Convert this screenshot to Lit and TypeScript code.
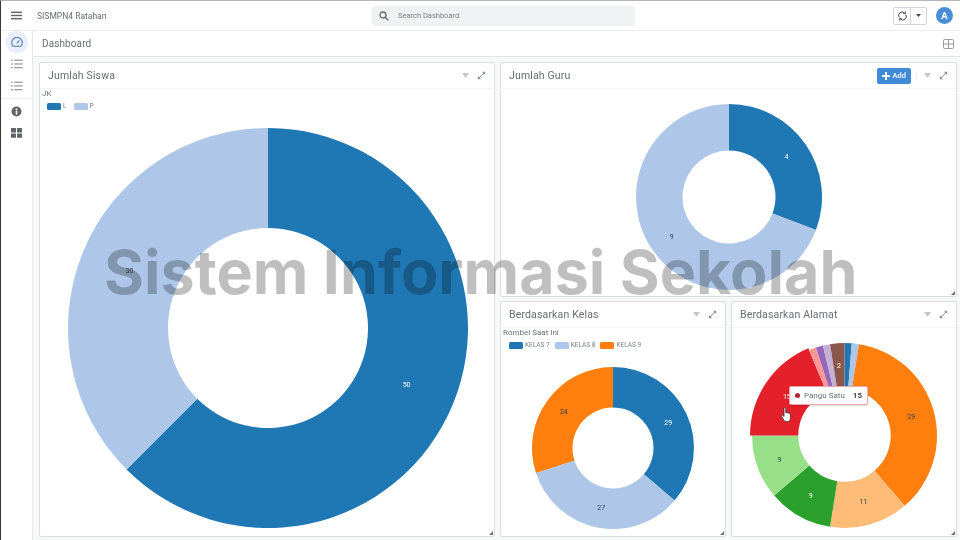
import { LitElement, html, css, svg } from "lit";
import { customElement, property } from "lit/decorators.js";

interface Slice { v: number; c: string; t?: string; label?: boolean; grow?: number }

const BLUE = "#1f77b4", LBLUE = "#aec7e8", ORANGE = "#ff7f0e", PEACH = "#ffbb78";
const DARK = "#333f4d", LIGHT = "#ffffff";

@customElement("x-donut")
class XDonut extends LitElement {
  @property({ type: Number }) size = 100;
  @property({ type: Number }) fontSize = 7;
  @property({ attribute: false }) slices: Slice[] = [];
  static styles = css`
    :host { display: block; flex: none; }
    svg { display: block; overflow: visible; }
    text { font-family: Roboto, sans-serif; text-anchor: middle; dominant-baseline: central; }
  `;
  render() {
    const r = this.size / 2, ri = r / 2;
    const total = this.slices.reduce((a, s) => a + s.v, 0);
    const pt = (rad: number, a: number) => [r + rad * Math.sin(a), r - rad * Math.cos(a)];
    let acc = 0;
    const parts = this.slices.map((s) => {
      const a0 = (acc / total) * 2 * Math.PI;
      acc += s.v;
      const a1 = (acc / total) * 2 * Math.PI;
      const large = a1 - a0 > Math.PI ? 1 : 0;
      const ro = r + (s.grow ?? 0);
      const [x0, y0] = pt(ro, a0), [x1, y1] = pt(ro, a1), [x2, y2] = pt(ri, a1), [x3, y3] = pt(ri, a0);
      const d = `M${x0} ${y0}A${ro} ${ro} 0 ${large} 1 ${x1} ${y1}L${x2} ${y2}A${ri} ${ri} 0 ${large} 0 ${x3} ${y3}Z`;
      const [lx, ly] = pt(r * 0.75, (a0 + a1) / 2);
      return svg`<path d=${d} fill=${s.c}></path>${s.label === false ? null : svg`<text x=${lx} y=${ly} font-size=${this.fontSize} fill=${s.t ?? DARK}>${s.v}</text>`}`;
    });
    return html`<svg width=${this.size} height=${this.size} viewBox="0 0 ${this.size} ${this.size}">${parts}</svg>`;
  }
}

const filterIcon = html`<svg width="7" height="5" viewBox="0 0 7 5"><path d="M0 0h7L3.5 5z" fill="#c4c8cc"/></svg>`;
const expandIcon = html`<svg width="9" height="9" viewBox="0 0 9 9"><path d="M1.5 7.5l6-6" stroke="#8a8f94" stroke-width=".9" fill="none"/><path d="M5 .8h3.2V4zM.8 5v3.2H4z" fill="#8a8f94"/></svg>`;
const listIcon = html`<svg width="12" height="10" viewBox="0 0 12 10" fill="#9a9fa4"><rect x="0" y=".6" width="1.8" height="1.3"/><rect x="3.2" y=".6" width="8.400" height="1.3"/><rect x="0" y="4.300" width="1.8" height="1.3"/><rect x="3.2" y="4.300" width="8.400" height="1.3"/><rect x="0" y="8" width="1.8" height="1.3"/><rect x="3.2" y="8" width="8.400" height="1.3"/></svg>`;

@customElement("x-panel")
class XPanel extends LitElement {
  @property() heading = "";
  static styles = css`
    :host { display: flex; flex-direction: column; min-width: 0; min-height: 0; background: #fff; border: 1px solid #dcdfe2; border-radius: 2px; box-sizing: border-box; position: relative; }
    .head { height: 25px; flex: none; display: flex; align-items: center; padding: 0 8px 0 8px; border-bottom: 1px solid #f3f4f5; }
    .title { flex: 1; font: 400 10.5px Roboto, sans-serif; letter-spacing: .15px; color: #666c72; }
    .tools { display: flex; align-items: center; gap: 8px; }
    .body { flex: 1; min-height: 0; display: flex; flex-direction: column; }
    .grip { position: absolute; right: 1px; bottom: 1px; width: 4px; height: 4px; }
  `;
  render() {
    return html`
      <div class="head">
        <span class="title">${this.heading}</span>
        <slot name="action"></slot>
        <span class="tools">${filterIcon}${expandIcon}</span>
      </div>
      <div class="body"><slot></slot></div>
      <svg class="grip" viewBox="0 0 5 5"><path d="M5 0v5H0z" fill="#6d7278"/></svg>`;
  }
}

@customElement("app-root")
class AppRoot extends LitElement {
  static styles = css`
    :host { display: block; width: 960px; height: 540px; overflow: hidden; position: relative; box-sizing: border-box; border-top: 1px solid #b4b6b8; border-left: 1px solid #3a3a3a; background: #f7f8f8; font-family: Roboto, sans-serif; filter: blur(.3px); }
    .top { height: 29px; display: grid; grid-template-columns: 371px 263px 1fr; align-items: center; background: #fff; border-bottom: 1px solid #eceeef; }
    .brand { display: flex; align-items: center; gap: 15px; padding-left: 10px; font-size: 8.5px; color: #666c72; }
    .search { height: 20px; background: #f0f1f2; border-radius: 4px; display: flex; align-items: center; gap: 9px; padding-left: 7px; font-size: 7.5px; color: #777c82; }
    .right { display: flex; align-items: center; justify-content: flex-end; padding-right: 7px; gap: 9px; }
    .btns { display: flex; height: 16px; border: 1px solid #d3d5d8; border-radius: 2px; background: #fff; }
    .btns span { display: flex; align-items: center; justify-content: center; }
    .sync { width: 16px; border-right: 1px solid #d3d5d8; }
    .caret { width: 15px; }
    .avatar { width: 17px; height: 17px; border-radius: 50%; background: #4a8fd6; color: #fff; font-size: 9.5px; font-weight: 700; display: flex; align-items: center; justify-content: center; }
    .main { display: flex; height: 509px; }
    .side { width: 31px; flex: none; background: #fff; border-right: 1px solid #e4e6e8; display: flex; flex-direction: column; align-items: center; }
    .item { width: 22px; height: 22px; display: flex; align-items: center; justify-content: center; border-radius: 50%; }
    .item.on { background: #e9f0f9; }
    .sep { align-self: stretch; height: 1px; background: #eceeef; margin: 1px 0; }
    .page { flex: 1; min-width: 0; display: flex; flex-direction: column; }
    .crumb { height: 25px; flex: none; display: flex; align-items: center; justify-content: space-between; padding: 0 6px 0 9px; background: #fff; border-bottom: 1px solid #e4e6e8; font-size: 10px; letter-spacing: .1px; color: #666c72; }
    .grid { flex: 1; min-height: 0; display: grid; grid-template-columns: 456px 457px; gap: 5px; padding: 5px 3px 3px 6px; }
    .col { display: grid; grid-template-rows: 235px 236px; gap: 4px; min-height: 0; }
    .row { display: grid; grid-template-columns: 226px 226px; gap: 5px; min-height: 0; }
    .legend-title { font-size: 8px; color: #6b7076; padding: 0 0 0 2px; line-height: 10px; }
    .legend { display: flex; align-items: center; padding: 3px 0 0 8px; font-size: 6.5px; color: #7c8186; line-height: 8px; }
    .legend.tight { padding-left: 7px; }
    .sw { width: 14px; height: 7px; border-radius: 1.5px; margin-right: 2px; }
    .lab { margin-right: 7px; }
    .lab.wide { margin-right: 5px; }
    .chart-a { margin: 18px 0 0 28px; }
    .chart-b { margin: 15px 0 0 135px; }
    .chart-c { margin: 18px 0 0 31px; }
    .chart-d { margin: 15px 0 0 20px; }
    .add { display: flex; align-items: center; gap: 3px; height: 16px; padding: 0 5px; background: #3f8bd8; color: #fff; border-radius: 2px; font-size: 7.5px; font-weight: 500; margin-right: 5px; }
    .vline { width: 1px; height: 12px; background: #eceeef; margin-right: 7px; }
    .watermark { position: absolute; left: 103px; top: 236px; font: 700 61px Inter, sans-serif; color: rgba(0,0,0,.25); white-space: nowrap; line-height: 70px; pointer-events: none; }
    .tip { position: absolute; left: 788px; top: 385px; height: 19px; width: 79px; box-sizing: border-box; background: #fff; border: 1px solid #e9a9ad; border-radius: 2px; display: flex; align-items: center; padding: 0 5px 0 5px; font-size: 8px; color: #6b7076; box-shadow: 0 1px 2px rgba(0,0,0,.15); }
    .dot { width: 5px; height: 5px; border-radius: 50%; background: #b3252e; margin-right: 4px; }
    .tip b { margin-left: auto; color: #444; }
    .hand { position: absolute; left: 780px; top: 406px; }
  `;
  render() {
    const siswa: Slice[] = [{ v: 50, c: BLUE, t: LIGHT }, { v: 30, c: LBLUE }];
    const guru: Slice[] = [{ v: 4, c: BLUE, t: LIGHT }, { v: 9, c: LBLUE }];
    const kelas: Slice[] = [{ v: 29, c: BLUE, t: LIGHT }, { v: 27, c: LBLUE }, { v: 24, c: ORANGE }];
    const alamat: Slice[] = [
      { v: 1, c: BLUE, label: false }, { v: 1, c: LBLUE, label: false }, { v: 29, c: ORANGE }, { v: 11, c: PEACH },
      { v: 9, c: "#2ca02c", t: LIGHT }, { v: 9, c: "#98df8a" }, { v: 15, c: "#e4202a", t: LIGHT, grow: 2 },
      { v: 1, c: "#ff9896", label: false }, { v: 1, c: "#9467bd", label: false }, { v: 1, c: "#c5b0d5", label: false },
      { v: 2, c: "#8c564b", t: LIGHT },
    ];
    return html`
      <div class="top">
        <div class="brand">
          <svg width="11" height="9" viewBox="0 0 11 9" fill="#5f6469"><rect width="11" height="1.4" y=".6"/><rect width="11" height="1.4" y="3.8"/><rect width="11" height="1.4" y="7"/></svg>
          <span>SISMPN4 Ratahan</span>
        </div>
        <div class="search">
          <svg width="10" height="10" viewBox="0 0 10 10" fill="none" stroke="#5f6469" stroke-width="1.3"><circle cx="4" cy="4" r="3"/><path d="M6.2 6.2L9.4 9.4"/></svg>
          <span>Search Dashboard</span>
        </div>
        <div class="right">
          <div class="btns">
            <span class="sync"><svg width="9" height="10" viewBox="0 0 9 10" fill="none" stroke="#444" stroke-width="1"><path d="M1.2 6.4A3.5 3.5 0 0 1 6.6 2"/><path d="M7.8 3.6A3.5 3.5 0 0 1 2.4 8"/><path d="M7.4 .4v2.2H5.2M1.6 9.6V7.4h2.2" stroke-width=".9"/></svg></span>
            <span class="caret"><svg width="5" height="3" viewBox="0 0 5 3"><path d="M0 0h5L2.5 3z" fill="#444"/></svg></span>
          </div>
          <div class="avatar">A</div>
        </div>
      </div>
      <div class="main">
        <div class="side">
          <div class="item on"><svg width="12" height="10" viewBox="0 0 12 10" fill="none" stroke="#4f7fae" stroke-width="1.1"><path d="M2 9.2A5.3 5.3 0 1 1 10 9.2z"/><path d="M6 6.4L8.4 3.4"/></svg></div>
          <div class="item">${listIcon}</div>
          <div class="item">${listIcon}</div>
          <div class="sep"></div>
          <div class="item"><svg width="11" height="11" viewBox="0 0 11 11"><circle cx="5.5" cy="5.5" r="5" fill="#5f6469"/><rect x="4.7" y="4.6" width="1.6" height="4" fill="#fff"/><rect x="4.7" y="2.4" width="1.6" height="1.5" fill="#fff"/></svg></div>
          <div class="item"><svg width="11" height="10" viewBox="0 0 11 10" fill="#5f6469"><rect width="5" height="4.4" rx=".5"/><rect x="6" width="5" height="4.4" rx=".5"/><rect y="5.4" width="5" height="4.4" rx=".5"/><rect x="6" y="5.4" width="5" height="4.4" rx=".5"/></svg></div>
        </div>
        <div class="page">
          <div class="crumb">
            <span>Dashboard</span>
            <svg width="11" height="10" viewBox="0 0 11 10" fill="none" stroke="#8d9297" stroke-width=".9"><rect x=".5" y=".5" width="10" height="9" rx="1"/><path d="M.5 5h10M5.5 .5v9"/></svg>
          </div>
          <div class="grid">
            <x-panel heading="Jumlah Siswa">
              <div class="legend-title">JK</div>
              <div class="legend tight"><span class="sw" style="background:${BLUE}"></span><span class="lab">L</span><span class="sw" style="background:${LBLUE}"></span><span>P</span></div>
              <x-donut class="chart-a" size="400" .slices=${siswa}></x-donut>
            </x-panel>
            <div class="col">
              <x-panel heading="Jumlah Guru">
                <div slot="action" class="add"><svg width="8" height="8" viewBox="0 0 8 8" fill="#fff"><rect x="3" width="2" height="8"/><rect y="3" width="8" height="2"/></svg>Add</div>
                <div slot="action" class="vline"></div>
                <x-donut class="chart-b" size="186" .slices=${guru}></x-donut>
              </x-panel>
              <div class="row">
                <x-panel heading="Berdasarkan Kelas">
                  <div class="legend-title">Rombel Saat Ini</div>
                  <div class="legend"><span class="sw" style="background:${BLUE}"></span><span class="lab wide">KELAS 7</span><span class="sw" style="background:${LBLUE}"></span><span class="lab wide">KELAS 8</span><span class="sw" style="background:${ORANGE}"></span><span>KELAS 9</span></div>
                  <x-donut class="chart-c" size="162" .slices=${kelas}></x-donut>
                </x-panel>
                <x-panel heading="Berdasarkan Alamat">
                  <x-donut class="chart-d" size="185" .slices=${alamat}></x-donut>
                </x-panel>
              </div>
            </div>
          </div>
        </div>
      </div>
      <div class="watermark">Sistem Informasi Sekolah</div>
      <div class="tip"><span class="dot"></span>Pangu Satu<b>15</b></div>
      <svg class="hand" width="11" height="16" viewBox="0 0 11 16"><path d="M3 1.5c0-1.2 1.8-1.2 1.8 0V6l.4-.4c.7-.3 1.3 0 1.4.5.6-.4 1.3-.1 1.4.5.6-.3 1.4 0 1.4.8v3.4c0 1.8-.7 2.9-1.3 3.8H3.8C3 13.400 1.800 11.500.8 9.800c-.6-1-.2-1.900.7-1.700L3 9.400z" fill="#fff" stroke="#333" stroke-width=".8"/></svg>
    `;
  }
}
